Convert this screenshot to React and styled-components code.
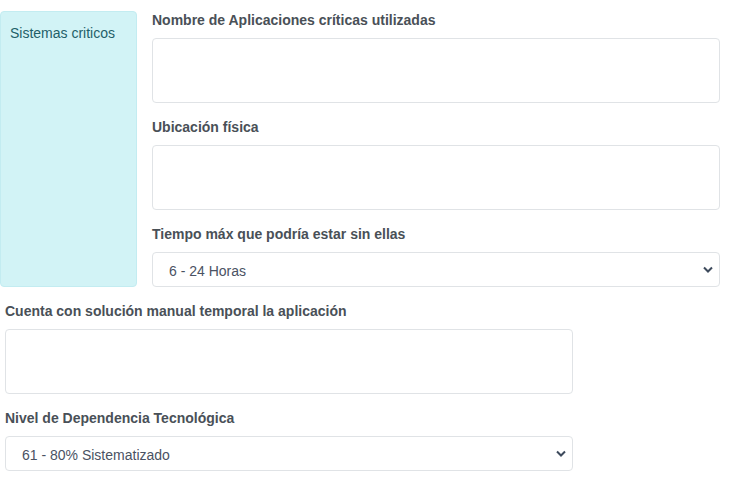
import React from 'react'
import styled, {createGlobalStyle} from 'styled-components'

const GlobalStyle = createGlobalStyle`
  body {
    margin: 0;
    background: #fff;
    font-family: "Liberation Sans", Arial, sans-serif;
    font-size: 14px;
    line-height: 21px;
    color: #495057;
  }
`

const Page = styled.div`
  width: 731px;
  padding: 10px 11px 0 0;
  box-sizing: border-box;
`

const TopRow = styled.div`
  display: grid;
  grid-template-columns: 137px 1fr;
  column-gap: 15px;
  align-items: start;
`

const Section = styled.div`
  background: #d2f3f6;
  border: 1px solid #c3ecf1;
  border-radius: 4px;
  margin-top: 1px;
  height: 276px;
  box-sizing: border-box;
  padding: 11px 9px;
  color: #1f5f69;
`

const Column = styled.div`
  display: flex;
  flex-direction: column;
`

const Lower = styled.div`
  width: 568px;
  margin-left: 5px;
  padding-top: 14px;
  display: flex;
  flex-direction: column;
`

const Group = styled.div`
  display: flex;
  flex-direction: column;
  margin-bottom: ${props => props.last ? 0 : 14}px;
`

const Label = styled.label`
  font-weight: bold;
  color: #495057;
  margin-bottom: 7px;
`

const TextArea = styled.textarea`
  height: 65px;
  box-sizing: border-box;
  border: 1px solid #e0e3e6;
  border-radius: 4px;
  resize: none;
  font: inherit;
  padding: 6px 12px;
  outline: none;
`

const SelectWrap = styled.div`
  position: relative;
`

const Select = styled.select`
  width: 100%;
  height: 35px;
  box-sizing: border-box;
  appearance: none;
  border: 1px solid #e0e3e6;
  border-radius: 4px;
  background: #fff;
  font: inherit;
  color: #4a5263;
  padding: 3px 30px 0 16px;
  outline: none;
`

const Arrow = styled.svg`
  position: absolute;
  right: 6px;
  top: 13px;
  pointer-events: none;
`

const Chevron = () =>
  <Arrow width="12" height="9" viewBox="0 0 12 9">
    <path d="M2 2.5 L6 6.5 L10 2.5" fill="none" stroke="#3d4a5c" strokeWidth="2" />
  </Arrow>

const Dropdown = ({value, options}) =>
  <SelectWrap>
    <Select defaultValue={value}>
      {options.map(o => <option key={o}>{o}</option>)}
    </Select>
    <Chevron />
  </SelectWrap>

const App = () =>
  <>
    <GlobalStyle />
    <Page>
      <TopRow>
        <Section>Sistemas criticos</Section>
        <Column>
          <Group>
            <Label>Nombre de Aplicaciones críticas utilizadas</Label>
            <TextArea />
          </Group>
          <Group>
            <Label>Ubicación física</Label>
            <TextArea />
          </Group>
          <Group last>
            <Label>Tiempo máx que podría estar sin ellas</Label>
            <Dropdown value="6 - 24 Horas" options={['0 - 6 Horas', '6 - 24 Horas', '24 - 48 Horas', 'Más de 48 Horas']} />
          </Group>
        </Column>
      </TopRow>
      <Lower>
        <Group>
          <Label>Cuenta con solución manual temporal la aplicación</Label>
          <TextArea />
        </Group>
        <Group last>
          <Label>Nivel de Dependencia Tecnológica</Label>
          <Dropdown value="61 - 80% Sistematizado" options={['0 - 20% Sistematizado', '21 - 40% Sistematizado', '41 - 60% Sistematizado', '61 - 80% Sistematizado', '81 - 100% Sistematizado']} />
        </Group>
      </Lower>
    </Page>
  </>

export default App
